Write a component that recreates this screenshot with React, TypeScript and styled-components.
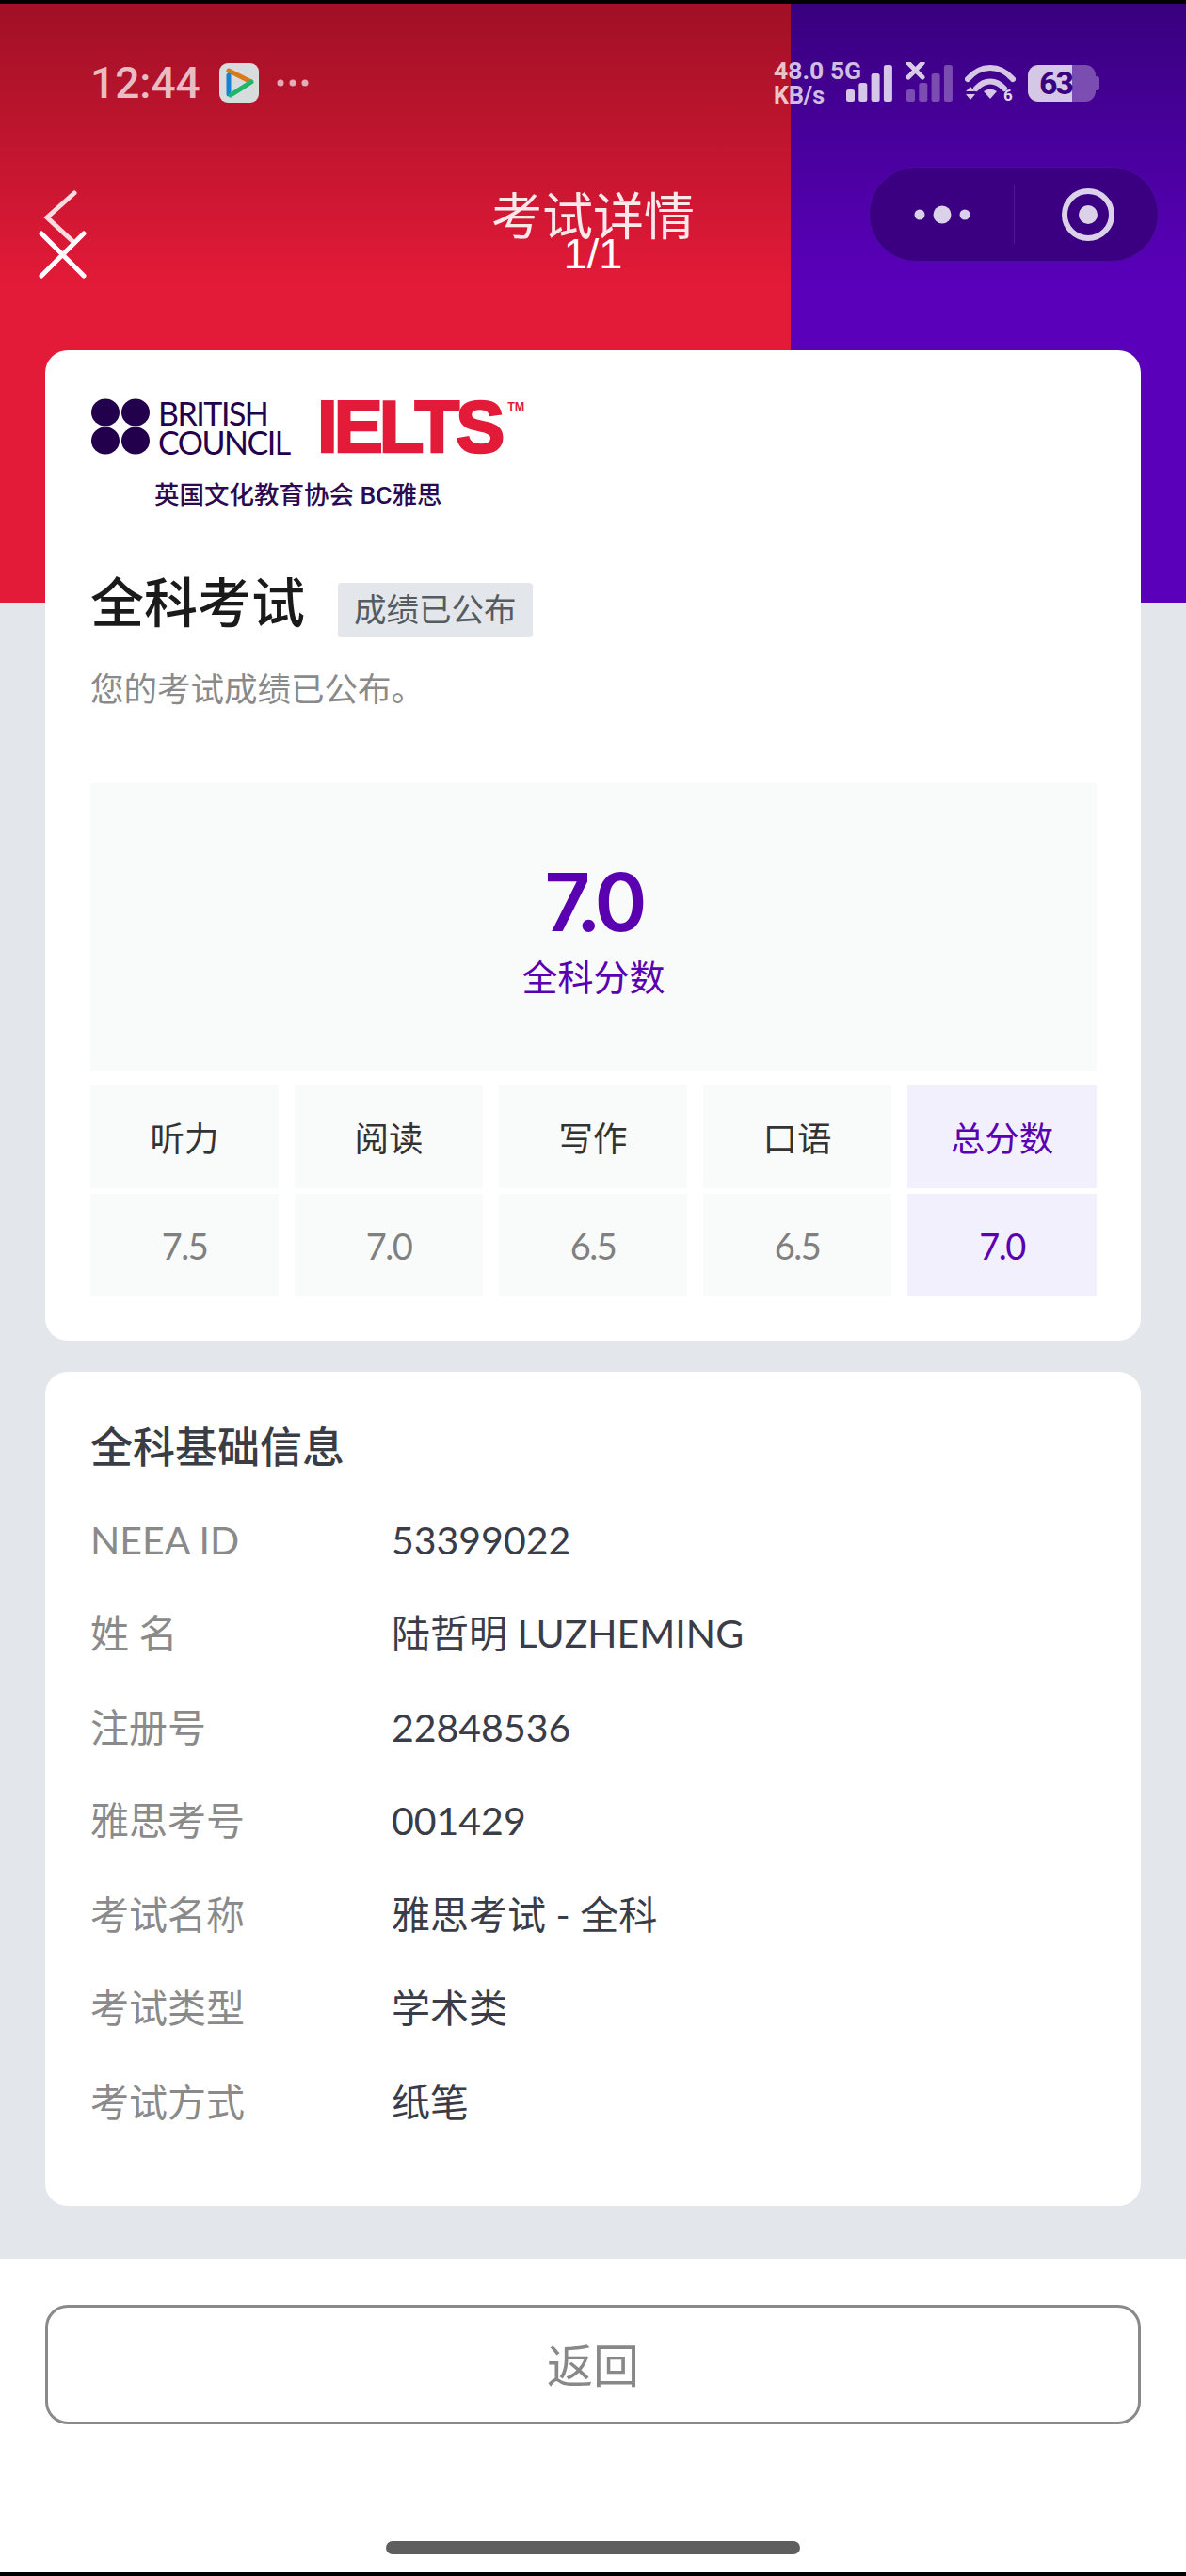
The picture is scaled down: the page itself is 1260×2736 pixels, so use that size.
import React from "react";
import styled, { createGlobalStyle } from "styled-components";

const SANS = `Roboto, "Noto Sans CJK SC", sans-serif`;
const BODY = `Lato, "Noto Sans CJK SC", sans-serif`;

const GlobalStyle = createGlobalStyle`
  html, body {
    margin: 0;
    padding: 0;
    background: #000;
  }
  * {
    box-sizing: border-box;
  }
`;

const Screen = styled.div`
  width: 1260px;
  height: 2736px;
  display: flex;
  flex-direction: column;
  border-top: 4px solid #000;
  border-bottom: 4px solid #000;
  font-family: ${SANS};
  overflow: hidden;
`;

const Main = styled.div`
  height: 2395px;
  display: flex;
  flex-direction: column;
  background-color: #e3e6ea;
  background-image: linear-gradient(180deg, #a01026 0, #e31a38 300px),
    linear-gradient(180deg, #38007e 0, #5a00bb 300px);
  background-size: 840px 636px, 420px 636px;
  background-position: 0 0, 840px 0;
  background-repeat: no-repeat;
`;

const StatusBar = styled.div`
  height: 48px;
  margin-top: 60px;
  padding-left: 96px;
  display: flex;
  align-items: center;
`;

const Time = styled.div`
  font-size: 46px;
  font-weight: 500;
  line-height: 48px;
  width: 137px;
  color: rgba(255, 255, 255, 0.72);
`;

const AppIcon = styled.svg`
  width: 42px;
  height: 42px;
  flex: none;
`;

const MoreDots = styled.svg`
  width: 34px;
  height: 10px;
  margin-left: 19px;
  flex: none;
`;

const StatusRight = styled.div`
  margin-left: auto;
  margin-right: 96px;
  display: flex;
  align-items: center;
`;

const NetSpeed = styled.div`
  width: 76px;
  color: rgba(255, 255, 255, 0.75);
  font-weight: 700;
  font-size: 26.5px;
  line-height: 26px;
  white-space: nowrap;
  div + div {
    font-size: 25px;
    margin-top: 1px;
  }
`;

const Signal = styled.svg`
  width: 50px;
  height: 44px;
  flex: none;
`;

const SignalGap = styled.div`
  width: 14px;
  flex: none;
`;

const Wifi = styled.svg`
  width: 54px;
  height: 42px;
  flex: none;
  margin-left: 13px;
`;

const Battery = styled.div`
  position: relative;
  width: 72px;
  height: 39px;
  margin-left: 13px;
  border-radius: 11px;
  background: linear-gradient(
    90deg,
    rgba(255, 255, 255, 0.78) 65%,
    rgba(255, 255, 255, 0.3) 65%
  );
  color: #3a0080;
  font-size: 34px;
  font-weight: 700;
  line-height: 39px;
  padding-left: 12px;
  letter-spacing: -2px;
  &::after {
    content: "";
    position: absolute;
    right: -4px;
    top: 12px;
    width: 4px;
    height: 15px;
    border-radius: 0 3px 3px 0;
    background: rgba(255, 255, 255, 0.3);
  }
`;

const TitleBar = styled.div`
  height: 101px;
  margin-top: 65px;
  display: grid;
  grid-template-columns: 1fr auto 1fr;
  grid-template-rows: 101px;
  align-items: center;
`;

const NavIcon = styled.svg`
  width: 60px;
  height: 130px;
  margin-left: 36px;
  align-self: start;
`;

const TitleStack = styled.div`
  align-self: start;
  display: flex;
  flex-direction: column;
  align-items: center;
  color: #fff;
  padding-top: 28px;
`;

const PageTitle = styled.div`
  font-size: 54px;
  line-height: 54px;
  color: rgba(255, 255, 255, 0.9);
`;

const PageCount = styled.div`
  font-family: "Liberation Sans", sans-serif;
  font-size: 45px;
  line-height: 36px;
  margin-top: -7px;
`;

const Capsule = styled.div`
  justify-self: end;
  margin-right: 29px;
  width: 308px;
  height: 101px;
  border-radius: 51px;
  background: #3b0082;
  border: 1px solid #4a0c9e;
  display: flex;
  align-items: center;
`;

const CapsulePart = styled.svg`
  width: 153px;
  height: 62px;
  flex: none;
`;

const CapsuleLine = styled.div`
  width: 1px;
  height: 62px;
  background: rgba(255, 255, 255, 0.1);
  flex: none;
`;

const Card = styled.div`
  margin: 0 48px;
  background: #fff;
  border-radius: 24px;
  padding: 0 47px 0 48px;
`;

const TopCard = styled(Card)`
  margin-top: 94px;
  height: 1052px;
  padding-top: 51px;
`;

const InfoCard = styled(Card)`
  margin-top: 33px;
  height: 886px;
  padding-top: 59px;
`;

const LogoRow = styled.div`
  display: flex;
  align-items: flex-start;
  height: 60px;
`;

const LogoDots = styled.svg`
  width: 62px;
  height: 60px;
  flex: none;
  margin-left: 1px;
`;

const BritishCouncil = styled.div`
  margin-left: 9px;
  width: 169px;
  font-family: Lato, sans-serif;
  font-size: 34px;
  line-height: 31px;
  color: #23004c;
  letter-spacing: -1.5px;
`;

const Ielts = styled.div`
  font-family: "Liberation Sans", sans-serif;
  font-weight: 700;
  font-size: 78px;
  line-height: 60px;
  letter-spacing: -4px;
  color: #e31a38;
  -webkit-text-stroke: 2.5px #e31a38;
`;

const Tm = styled.div`
  font-family: "Liberation Sans", sans-serif;
  font-weight: 700;
  font-size: 12.5px;
  line-height: 12px;
  margin: 3px 0 0 7px;
  color: #e31a38;
`;

const LogoCaption = styled.div`
  margin: 30px 0 0 68px;
  font-size: 26.5px;
  line-height: 26px;
  font-weight: 500;
  color: #2b0a4f;
`;

const ExamRow = styled.div`
  margin-top: 75px;
  display: flex;
  align-items: flex-start;
  gap: 35px;
  height: 65px;
`;

const ExamName = styled.div`
  font-size: 57px;
  line-height: 56px;
  font-weight: 500;
  color: #1a1a1a;
`;

const Badge = styled.div`
  margin-top: 5px;
  height: 58px;
  padding: 0 17px;
  border-radius: 4px;
  background: #e3e6ea;
  color: #555b60;
  font-size: 34.5px;
  line-height: 58px;
`;

const Notice = styled.div`
  margin-top: 32px;
  font-size: 35.5px;
  line-height: 44px;
  color: #8a8a8a;
`;

const ScoreBox = styled.div`
  margin-top: 77px;
  height: 305px;
  background: #f9fafa;
  display: flex;
  flex-direction: column;
  align-items: center;
  padding-top: 77px;
  color: #5a00b0;
`;

const ScoreValue = styled.div`
  font-family: Inter, sans-serif;
  font-size: 85px;
  font-weight: 600;
  line-height: 100px;
  letter-spacing: -5px;
`;

const ScoreLabel = styled.div`
  font-size: 38px;
  line-height: 44px;
  margin-top: 8px;
`;

const BandGrid = styled.div`
  margin-top: 15px;
  display: grid;
  grid-template-columns: repeat(4, 200px) 201px;
  grid-template-rows: 110px 109px;
  column-gap: 17px;
  row-gap: 6px;
`;

const BandCell = styled.div<{ $total?: boolean; $value?: boolean }>`
  display: flex;
  align-items: center;
  justify-content: center;
  background: ${(p) => (p.$total ? "#f1f0fc" : "#f9fafa")};
  color: ${(p) => (p.$total ? "#5a00b0" : p.$value ? "#808080" : "#333")};
  font-family: ${BODY};
  font-size: ${(p) => (p.$value ? "38px" : "36.5px")};
  letter-spacing: ${(p) => (p.$value ? "-1.5px" : "0")};
`;

const InfoTitle = styled.div`
  font-size: 45px;
  line-height: 46px;
  font-weight: 500;
  color: #3a3d45;
  margin-bottom: 24px;
`;

const InfoRow = styled.div`
  height: 99.5px;
  display: flex;
  align-items: center;
  font-family: ${BODY};
  font-size: 41px;
  line-height: 42px;
`;

const InfoLabel = styled.div`
  width: 320px;
  flex: none;
  color: #8a8a8a;
  white-space: pre;
`;

const InfoValue = styled.div`
  color: #3a3c47;
`;

const Footer = styled.div`
  flex: 1;
  background: #fff;
  padding: 49px 48px 19px;
  display: flex;
  flex-direction: column;
  align-items: center;
`;

const BackButton = styled.div`
  width: 100%;
  height: 127px;
  border: 3px solid #8a8a8a;
  border-radius: 24px;
  padding-bottom: 5px;
  display: flex;
  align-items: center;
  justify-content: center;
  font-size: 49px;
  color: #888;
`;

const HomeBar = styled.div`
  margin-top: auto;
  width: 440px;
  height: 14px;
  border-radius: 7px;
  background: #5e5e5e;
`;

const bands = [
  ["听力", "7.5"],
  ["阅读", "7.0"],
  ["写作", "6.5"],
  ["口语", "6.5"],
  ["总分数", "7.0"],
];

const info = [
  ["NEEA ID", "53399022"],
  ["姓 名", "陆哲明 LUZHEMING"],
  ["注册号", "22848536"],
  ["雅思考号", "001429"],
  ["考试名称", "雅思考试 - 全科"],
  ["考试类型", "学术类"],
  ["考试方式", "纸笔"],
];

function SignalBars({ dim }: { dim?: boolean }) {
  const tops = [29, 22, 12, 3];
  return (
    <Signal viewBox="0 0 50 44" fill="#fff" fillOpacity={dim ? 0.3 : 0.78}>
      {tops.map((t, i) => (
        <rect key={i} x={1 + i * 13.3} y={t} width={9} height={42 - t} rx={2.5} />
      ))}
      {dim && (
        <path
          d="M3 1 L18 16 M18 1 L3 16"
          stroke="#fff"
          strokeOpacity={0.8}
          strokeWidth={5}
          strokeLinecap="round"
        />
      )}
    </Signal>
  );
}

export default function App() {
  return (
    <Screen>
      <GlobalStyle />
      <Main>
        <StatusBar>
          <Time>12:44</Time>
          <AppIcon viewBox="0 0 42 42">
            <rect width="42" height="42" rx="9" fill="#d9dcdc" />
            <path d="M10 8 L32 19" stroke="#d97a1a" strokeWidth="5" strokeLinecap="round" />
            <path d="M10 13 L10 33" stroke="#1a80d0" strokeWidth="5" strokeLinecap="round" />
            <path d="M12 34 L34 20" stroke="#1fb56a" strokeWidth="5" strokeLinecap="round" />
          </AppIcon>
          <MoreDots viewBox="0 0 34 10" fill="#fff" fillOpacity="0.65">
            <circle cx="4" cy="5" r="3.5" />
            <circle cx="17" cy="5" r="3.5" />
            <circle cx="30" cy="5" r="3.5" />
          </MoreDots>
          <StatusRight>
            <NetSpeed>
              <div>48.0 5G</div>
              <div>KB/s</div>
            </NetSpeed>
            <SignalBars />
            <SignalGap />
            <SignalBars dim />
            <Wifi viewBox="0 0 54 42" fill="none">
              <path
                d="M3 17 C17 1 37 1 51 17"
                stroke="#fff"
                strokeOpacity="0.78"
                strokeWidth="6"
                strokeLinecap="round"
              />
              <path
                d="M12 27 C21 17 33 17 42 27"
                stroke="#fff"
                strokeOpacity="0.78"
                strokeWidth="6"
                strokeLinecap="round"
              />
              <path d="M20 30 Q27 25 34 30 L27 38 Z" fill="#fff" fillOpacity="0.78" />
              <path d="M1 30 L6 25 L11 30 Z M1 33 L11 33 L6 39 Z" fill="#fff" fillOpacity="0.78" />
              <text
                x="41"
                y="40"
                fontFamily="Roboto, sans-serif"
                fontSize="17"
                fontWeight="700"
                fill="#fff"
                fillOpacity="0.85"
              >
                6
              </text>
            </Wifi>
            <Battery>63</Battery>
          </StatusRight>
        </StatusBar>

        <TitleBar>
          <NavIcon viewBox="36 177 60 130" fill="none" strokeLinecap="round">
            <path d="M79 205 L50 231 L77 256" stroke="#fff" strokeOpacity="0.85" strokeWidth="5" />
            <path d="M44 248 L89 293 M89 248 L44 293" stroke="#fff" strokeWidth="5" />
          </NavIcon>
          <TitleStack>
            <PageTitle>考试详情</PageTitle>
            <PageCount>1/1</PageCount>
          </TitleStack>
          <Capsule>
            <CapsulePart viewBox="0 0 153 62">
              <g fill="#fff" fillOpacity="0.82">
                <circle cx="53" cy="31" r="5.5" />
                <circle cx="77" cy="31" r="9.5" />
                <circle cx="101" cy="31" r="5.5" />
              </g>
            </CapsulePart>
            <CapsuleLine />
            <CapsulePart viewBox="0 0 153 62">
              <circle cx="78" cy="31" r="25" fill="none" stroke="#fff" strokeOpacity="0.82" strokeWidth="6" />
              <circle cx="78" cy="31" r="10" fill="#fff" fillOpacity="0.82" />
            </CapsulePart>
          </Capsule>
        </TitleBar>

        <TopCard>
          <LogoRow>
            <LogoDots viewBox="0 0 62 60" fill="#23004c">
              <ellipse cx="15" cy="15" rx="15" ry="14.5" />
              <ellipse cx="47" cy="15" rx="15" ry="14.5" />
              <ellipse cx="15" cy="45" rx="15" ry="14.5" />
              <ellipse cx="47" cy="45" rx="15" ry="14.5" />
            </LogoDots>
            <BritishCouncil>
              BRITISH
              <br />
              COUNCIL
            </BritishCouncil>
            <Ielts>IELTS</Ielts>
            <Tm>TM</Tm>
          </LogoRow>
          <LogoCaption>英国文化教育协会 BC雅思</LogoCaption>
          <ExamRow>
            <ExamName>全科考试</ExamName>
            <Badge>成绩已公布</Badge>
          </ExamRow>
          <Notice>您的考试成绩已公布。</Notice>
          <ScoreBox>
            <ScoreValue>7.0</ScoreValue>
            <ScoreLabel>全科分数</ScoreLabel>
          </ScoreBox>
          <BandGrid>
            {bands.map(([name], i) => (
              <BandCell key={name} $total={i === 4}>
                {name}
              </BandCell>
            ))}
            {bands.map(([name, score], i) => (
              <BandCell key={name} $value $total={i === 4}>
                {score}
              </BandCell>
            ))}
          </BandGrid>
        </TopCard>

        <InfoCard>
          <InfoTitle>全科基础信息</InfoTitle>
          {info.map(([label, value]) => (
            <InfoRow key={label}>
              <InfoLabel>{label}</InfoLabel>
              <InfoValue>{value}</InfoValue>
            </InfoRow>
          ))}
        </InfoCard>
      </Main>
      <Footer>
        <BackButton>返回</BackButton>
        <HomeBar />
      </Footer>
    </Screen>
  );
}
